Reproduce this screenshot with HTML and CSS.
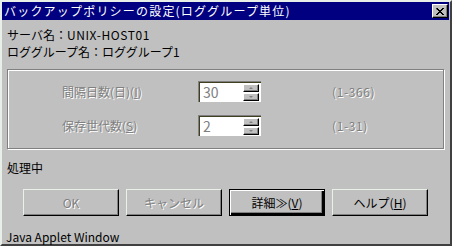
FILE: index.html
```html
<!DOCTYPE html>
<html lang="ja">
<head>
  <meta charset="UTF-8" />
  <title>バックアップポリシーの設定(ロググループ単位)</title>
  <link rel="stylesheet" href="styles.css">
</head>
<body>
  <div class="window">
    <div class="titlebar">
      <span class="title">バックアップポリシーの設定(ロググループ単位)</span>
      <button class="close-btn" aria-label="閉じる">
        <svg width="8" height="7" viewBox="0 0 8 7">
          <path d="M0 0h2v1h1v1h2v-1h1v-1h2v1h-1v1h-1v1h-1v1h1v1h1v1h1v1h-2v-1h-1v-1h-2v1h-1v1h-2v-1h1v-1h1v-1h1v-1h-1v-1h-1z" fill="#000"/>
        </svg>
      </button>
    </div>

    <div class="content">
      <div class="info">
        <div>サーバ名：<span class="latin">UNIX-HOST01</span></div>
        <div>ロググループ名：ロググループ1</div>
      </div>

      <div class="groupbox">
        <div class="row">
          <span class="label disabled">間隔日数(日)(<u>I</u>)</span>
          <div class="spinbox">
            <span class="spin-value">30</span>
            <div class="spin-buttons">
              <span class="spin-btn up"></span>
              <span class="spin-btn down"></span>
            </div>
          </div>
          <span class="range disabled">(1-366)</span>
        </div>
        <div class="row">
          <span class="label disabled">保存世代数(<u>S</u>)</span>
          <div class="spinbox">
            <span class="spin-value">2</span>
            <div class="spin-buttons">
              <span class="spin-btn up"></span>
              <span class="spin-btn down"></span>
            </div>
          </div>
          <span class="range disabled">(1-31)</span>
        </div>
      </div>

      <div class="status">処理中</div>

      <div class="buttons">
        <button class="btn" disabled><span class="disabled">OK</span></button>
        <button class="btn" disabled><span class="disabled">キャンセル</span></button>
        <button class="btn btn-default">詳細≫(<u>V</u>)</button>
        <button class="btn">ヘルプ(<u>H</u>)</button>
      </div>

      <div class="applet">Java Applet Window</div>
    </div>
  </div>
</body>
</html>
```

FILE: styles.css
```css
* {
  margin: 0;
  padding: 0;
  box-sizing: border-box;
}

body {
  font-family: 'Noto Sans CJK JP', 'DejaVu Sans', sans-serif;
  font-size: 12px;
  background: #c0c0c0;
  color: #000;
}

.window {
  width: 452px;
  height: 246px;
  background: #c0c0c0;
  border-top: 2px solid #e8eee8;
  border-left: 2px solid #e8eee8;
  border-right: 2px solid #404040;
  border-bottom: 2px solid #404040;
  display: flex;
  flex-direction: column;
}

.titlebar {
  height: 18px;
  background: #000080;
  display: flex;
  align-items: center;
  justify-content: space-between;
  padding: 0 1px 0 2px;
  margin-right: 1px;
}

.title {
  color: #fff;
  font-size: 12px;
  line-height: 18px;
  letter-spacing: 1.2px;
}

.close-btn {
  width: 16px;
  height: 14px;
  background: #c0c0c0;
  border: 1px solid;
  border-color: #fff #000 #000 #fff;
  box-shadow: inset -1px -1px #808080;
  display: flex;
  align-items: center;
  justify-content: center;
}

.content {
  flex: 1;
  padding: 0 6px 0 5px;
  display: flex;
  flex-direction: column;
}

.info {
  margin-top: 6px;
  line-height: 17px;
}

.latin {
  letter-spacing: 0.6px;
}

.groupbox {
  margin-top: 9px;
  height: 80px;
  border: 1px solid #808080;
  box-shadow: inset 1px 1px #fff, 1px 1px #fff;
  padding: 11px 0 0 54px;
  display: flex;
  flex-direction: column;
  gap: 13px;
}

.row {
  display: grid;
  grid-template-columns: 136px 63px auto;
  align-items: center;
  height: 21px;
}

.range {
  margin-left: 71px;
  letter-spacing: 0.6px;
}

.disabled {
  color: #808080;
  text-shadow: 1px 1px 0 #fff;
}

.spinbox {
  height: 21px;
  background: #fff;
  border-top: 1px solid #808080;
  border-left: 1px solid #808080;
  box-shadow: inset 1px 1px #404020;
  display: flex;
  align-items: center;
  justify-content: space-between;
  padding: 1px 2px 2px 4px;
}

.spin-value {
  color: #808080;
  font-size: 14px;
  line-height: 18px;
}

.spin-buttons {
  display: flex;
  flex-direction: column;
  gap: 1px;
  align-self: flex-start;
  margin-top: 1px;
}

.spin-btn {
  position: relative;
  width: 16px;
  height: 8px;
  background: #c0c0c0;
  border: 1px solid;
  border-color: #fff #000 #000 #fff;
  box-shadow: inset -1px -1px #808080;
}

.spin-btn::after {
  content: '';
  position: absolute;
  left: 5px;
  top: 2px;
  border-left: 2px solid transparent;
  border-right: 2px solid transparent;
}

.spin-btn.up::after {
  border-bottom: 2px solid #808080;
}

.spin-btn.down::after {
  border-top: 2px solid #808080;
}

.status {
  margin-top: 10px;
  line-height: 17px;
}

.buttons {
  margin: 13px 0 0 16px;
  display: flex;
  gap: 7px;
}

.btn {
  width: 96px;
  height: 27px;
  font-family: inherit;
  font-size: 12px;
  color: #000;
  background: #c0c0c0;
  border: 1px solid;
  border-color: #e8f0e8 #000 #000 #e8f0e8;
  box-shadow: inset -1px -1px #808080;
}

.btn-default {
  border: 1px solid #000;
  box-shadow: inset 1px 1px #fff, inset -2px -2px #000, inset -3px -3px #808080;
}

.applet {
  margin-top: 14px;
  line-height: 14px;
  margin-left: -1px;
}
```
